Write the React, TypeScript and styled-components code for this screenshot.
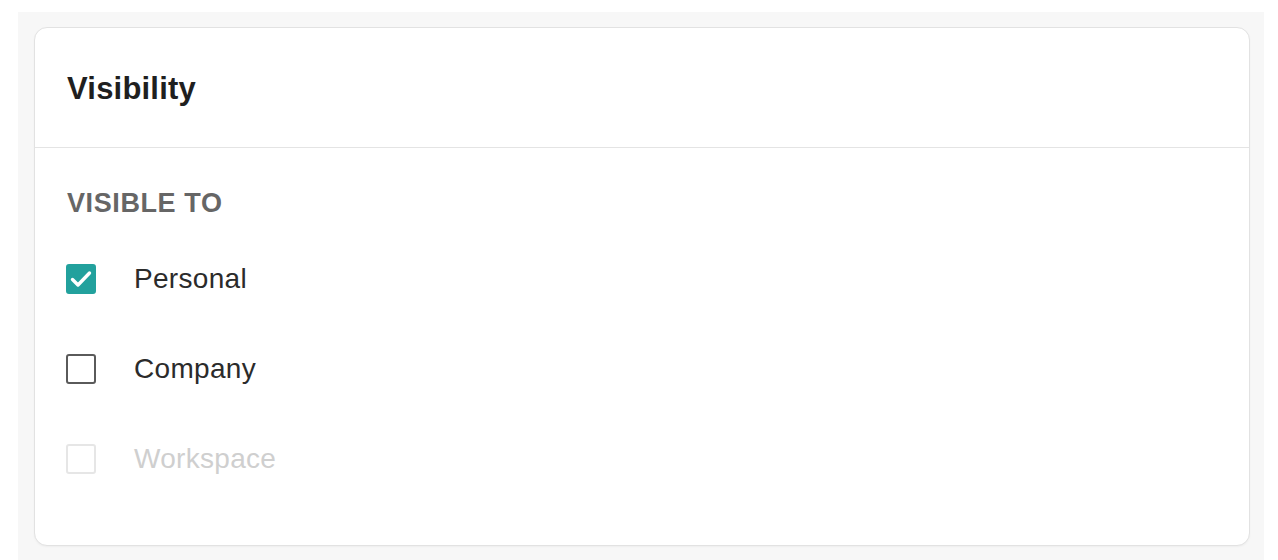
import React from "react";
import styled, { createGlobalStyle } from "styled-components";

const GlobalStyle = createGlobalStyle`
  html, body {
    margin: 0;
    padding: 0;
    background: #ffffff;
    font-family: "Liberation Sans", Arial, sans-serif;
  }
`;

const Backdrop = styled.div`
  margin: 12px 14px 0 18px;
  padding: 15px 14px 20px 16px;
  background: #f7f7f7;
  min-height: 560px;
  box-sizing: border-box;
`;

const Card = styled.section`
  background: #ffffff;
  border: 1.5px solid #e2e2e2;
  border-radius: 13px;
  box-shadow: 0 1px 2px rgba(0, 0, 0, 0.04);
  overflow: hidden;
`;

const Header = styled.header`
  height: 120px;
  display: flex;
  align-items: center;
  padding: 3px 32px 0;
  box-sizing: border-box;
  border-bottom: 1.5px solid #e4e4e4;
`;

const Title = styled.h2`
  margin: 0;
  font-size: 31px;
  font-weight: 700;
  color: #1f1f1f;
  letter-spacing: 0.2px;
`;

const Body = styled.div`
  padding: 38px 32px 41px;
`;

const SectionLabel = styled.div`
  font-size: 27px;
  line-height: 34px;
  font-weight: 700;
  color: #666666;
  letter-spacing: 0.6px;
  text-transform: uppercase;
  margin-bottom: 14px;
`;

const Option = styled.label<{ $disabled?: boolean }>`
  display: flex;
  align-items: center;
  gap: 38px;
  height: 90px;
  font-size: 28px;
  letter-spacing: 0.3px;
  color: ${(p) => (p.$disabled ? "#cfcfcf" : "#2b2b2b")};
  cursor: ${(p) => (p.$disabled ? "default" : "pointer")};
`;

const Box = styled.span<{ $checked?: boolean; $disabled?: boolean }>`
  width: 30px;
  height: 30px;
  box-sizing: border-box;
  border-radius: 3px;
  margin-left: -1px;
  display: flex;
  align-items: center;
  justify-content: center;
  background: ${(p) => (p.$checked ? "#22a19d" : "#ffffff")};
  border: 2.5px solid
    ${(p) => (p.$checked ? "#22a19d" : p.$disabled ? "#e6e6e6" : "#5a5a5a")};
`;

type Item = { label: string; checked?: boolean; disabled?: boolean };

const items: Item[] = [
  { label: "Personal", checked: true },
  { label: "Company" },
  { label: "Workspace", disabled: true },
];

function App() {
  return (
    <>
      <GlobalStyle />
      <Backdrop>
        <Card>
          <Header>
            <Title>Visibility</Title>
          </Header>
          <Body>
            <SectionLabel>Visible to</SectionLabel>
            {items.map((it) => (
              <Option key={it.label} $disabled={it.disabled}>
                <Box $checked={it.checked} $disabled={it.disabled}>
                  {it.checked && (
                    <svg width="22" height="18" viewBox="0 0 22 18">
                      <path
                        d="M2.5 9.5 L8 15 L19.5 3"
                        fill="none"
                        stroke="#ffffff"
                        strokeWidth="3.4"
                        strokeLinecap="round"
                        strokeLinejoin="round"
                      />
                    </svg>
                  )}
                </Box>
                {it.label}
              </Option>
            ))}
          </Body>
        </Card>
      </Backdrop>
    </>
  );
}

export default App;
